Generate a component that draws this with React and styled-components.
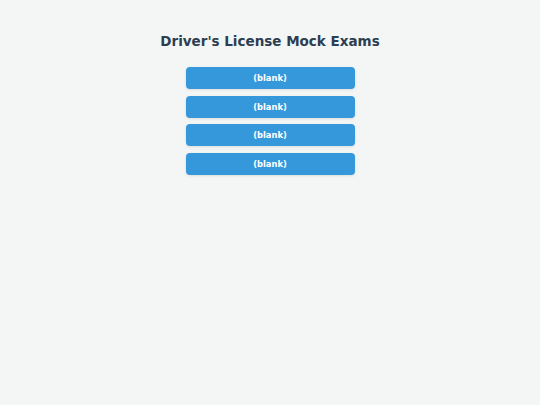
import styled, { createGlobalStyle } from "styled-components";

const GlobalStyle = createGlobalStyle`
  body {
    margin: 0;
    background: #f4f6f6;
    font-family: "DejaVu Sans", Verdana, sans-serif;
  }
`

const exams = ["(blank)", "(blank)", "(blank)", "(blank)"]

const App = () => {
  return (
    <>
      <GlobalStyle />
      <StyledPage>
        <StyledTitle>Driver's License Mock Exams</StyledTitle>
        <StyledList>
          {exams.map((label, i) => (
            <StyledExamButton key={i}>{label}</StyledExamButton>
          ))}
        </StyledList>
      </StyledPage>
    </>
  )
}
export default App

const StyledPage = styled.div`
  width: 540px;
  height: 405px;
  display: flex;
  flex-direction: column;
  align-items: center;
  padding-top: 33px;
  box-sizing: border-box;
`
const StyledTitle = styled.h1`
  margin: 0 0 17px;
  font-size: 13.5px;
  line-height: 17px;
  font-weight: bold;
  color: #2c3e50;
`
const StyledList = styled.div`
  display: flex;
  flex-direction: column;
  gap: 6.7px;
  width: 169px;
`
const StyledExamButton = styled.button`
  height: 22px;
  border: none;
  border-radius: 4px;
  background: #3498db;
  color: #ffffff;
  font-family: "DejaVu Sans", Verdana, sans-serif;
  font-size: 8.4px;
  font-weight: bold;
  box-shadow: 0 1px 3px rgba(0, 0, 0, 0.1);
  cursor: pointer;
  padding: 0;
`
